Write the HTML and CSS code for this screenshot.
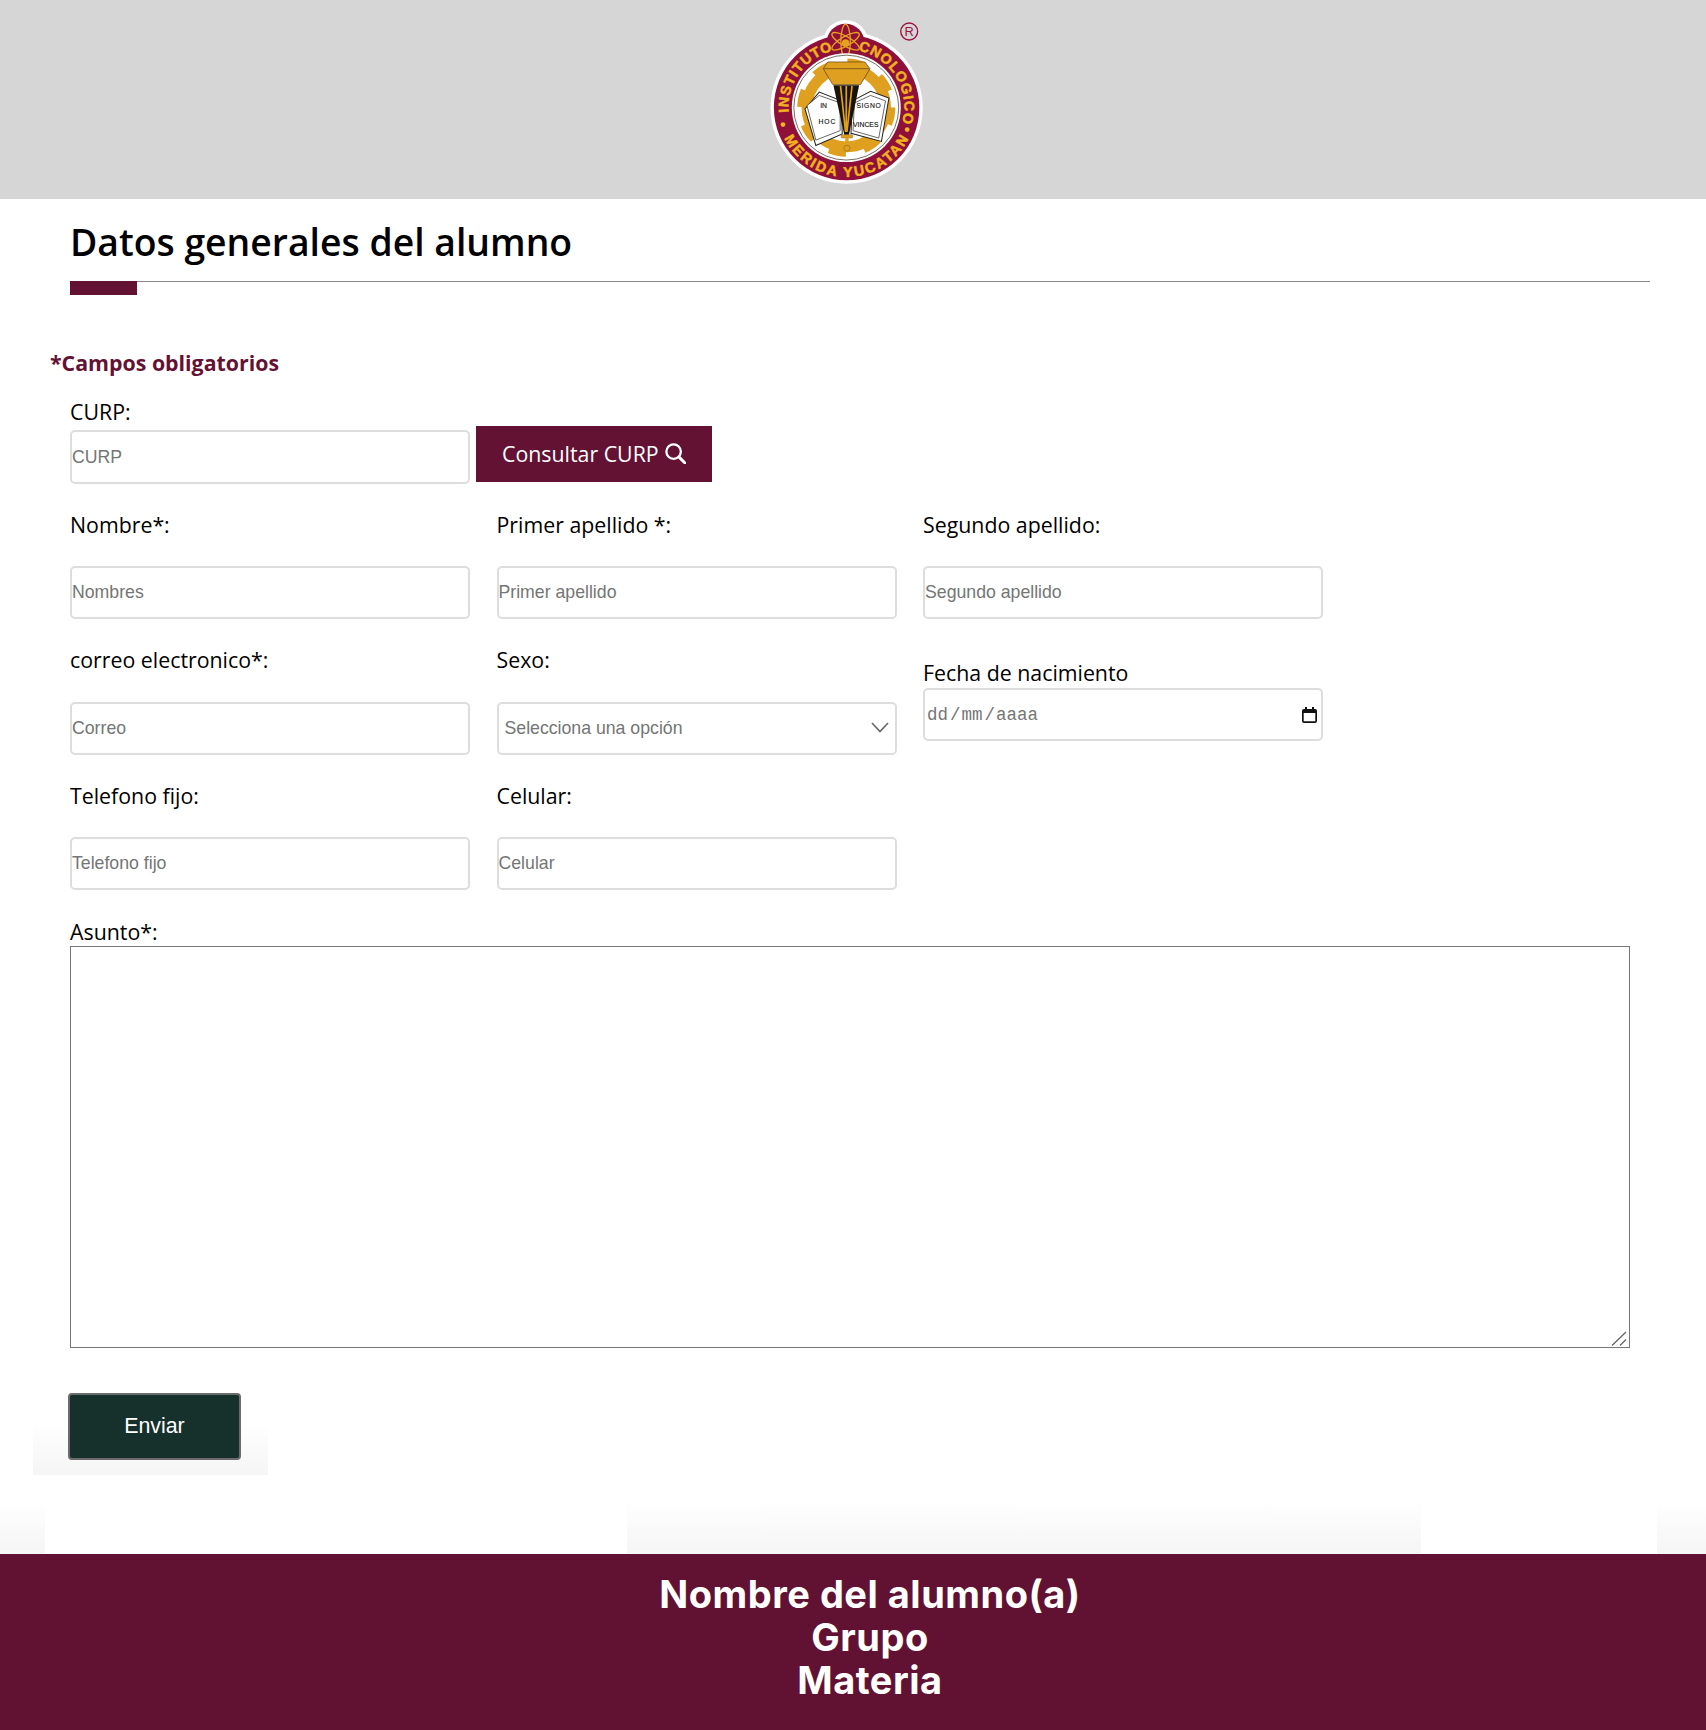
FILE: index.html
```html
<!DOCTYPE html>
<html lang="es">
<head>
    <meta charset="UTF-8">
    <meta name="viewport" content="width=device-width, initial-scale=1.0">
    <title>Datos generales del alumno</title>
    <link rel="stylesheet" href="styles.css">
</head>
<body>
    <header class="top-bar">
        <svg class="logo" viewBox="0 0 600 588" aria-label="Instituto Tecnologico Merida Yucatan">
            <defs>
                <path id="arc-top" d="M 150 332 A 171 171 0 1 1 488 350"></path>
                <path id="arc-bottom" d="M 137 408 A 205 205 0 0 0 505 408"></path>
            </defs>
            <!-- outer shapes -->
            <circle cx="321" cy="318" r="225" fill="#fff"></circle>
            <circle cx="318" cy="125" r="66" fill="#fff"></circle>
            <circle cx="321" cy="318" r="215" fill="#8f1139"></circle>
            <circle cx="318" cy="126" r="56" fill="#8f1139"></circle>
            <!-- ring text -->
            <text class="logo-ring" textLength="600" lengthAdjust="spacing"><textPath href="#arc-top">INSTITUTO TECNOLOGICO</textPath></text>
            <text class="logo-ring" textLength="455" lengthAdjust="spacing"><textPath href="#arc-bottom">MERIDA YUCATAN</textPath></text>
            <circle cx="133" cy="368" r="7" fill="#f0b21f"></circle>
            <circle cx="500" cy="383" r="7" fill="#f0b21f"></circle>
            <!-- atom, over the ring text -->
            <circle cx="318" cy="130" r="38" fill="#8f1139"></circle>
            <g fill="none" stroke="#e6a11f" stroke-width="4">
                <ellipse cx="318" cy="122" rx="14" ry="50"></ellipse>
                <ellipse cx="318" cy="122" rx="14" ry="46" transform="rotate(60 318 122)"></ellipse>
                <ellipse cx="318" cy="122" rx="14" ry="46" transform="rotate(-60 318 122)"></ellipse>
            </g>
            <circle cx="318" cy="127" r="11" fill="#e6a11f"></circle>
            <!-- inner disc -->
            <circle cx="320" cy="318" r="161" fill="#fff"></circle>
            <circle cx="320" cy="318" r="155" fill="none" stroke="#3a2a1a" stroke-width="2"></circle>
            <!-- gear -->
            <circle cx="320" cy="318" r="116" fill="none" stroke="#e0a01f" stroke-width="32"></circle>
            <circle cx="320" cy="318" r="137" fill="none" stroke="#e0a01f" stroke-width="16" stroke-dasharray="52 56"></circle>
            <!-- books -->
            <polygon points="198,322 240,272 306,298 308,396 230,430" fill="#fff" stroke="#222" stroke-width="3"></polygon>
            <polygon points="204,312 240,282 302,304 302,386 230,414" fill="#fff" stroke="#222" stroke-width="2"></polygon>
            <polygon points="338,298 392,270 446,290 424,418 334,394" fill="#fff" stroke="#222" stroke-width="3"></polygon>
            <polygon points="344,304 392,282 436,298 416,408 340,386" fill="#fff" stroke="#222" stroke-width="2"></polygon>
            <text class="logo-book" x="243" y="318">IN</text>
            <text class="logo-book" x="238" y="366" textLength="50">HOC</text>
            <text class="logo-book" x="350" y="318" textLength="72">SIGNO</text>
            <text class="logo-book" x="340" y="374" textLength="75">VINCES</text>
            <!-- torch -->
            <polygon points="265,183 375,183 390,203 362,250 280,250 252,203" fill="#e0a01f" stroke="#5a3c0c" stroke-width="2"></polygon>
            <path d="M254 203 H388" stroke="#5a3c0c" stroke-width="2"></path>
            <polygon points="282,252 358,252 328,398 314,398" fill="#1a1308"></polygon>
            <path d="M303 254 L318 390 M320 254 L320 390 M337 254 L322 390" stroke="#e0a01f" stroke-width="5" fill="none"></path>
            <rect x="305" y="398" width="34" height="10" rx="3" fill="#e0a01f" stroke="#5a3c0c"></rect>
            <rect x="317" y="408" width="10" height="24" fill="#e0a01f"></rect>
            <circle cx="322" cy="438" r="9" fill="#e0a01f" stroke="#5a3c0c"></circle>
            <!-- registered mark -->
            <circle cx="506" cy="93" r="25" fill="none" stroke="#a01040" stroke-width="4"></circle>
            <text class="logo-mark" x="506" y="107" text-anchor="middle">R</text>
        </svg>
    </header>

    <main>
        <div class="title-block">
            <h1 class="page-title">Datos generales del alumno</h1>
            <div class="title-rule"><span class="title-accent"></span></div>
        </div>

        <p class="required-note">*Campos obligatorios</p>

        <form class="student-form">
            <label class="curp-label" for="curp">CURP:</label>
            <div class="curp-row">
                <input class="text-input" type="text" id="curp" placeholder="CURP">
                <button class="curp-button" type="button">
                    Consultar CURP
                    <svg class="search-icon" viewBox="0 0 20 20">
                        <circle cx="8.2" cy="8.2" r="6.9" fill="none" stroke="#fff" stroke-width="2.2"></circle>
                        <path d="M13.2 13.2 L19 19" stroke="#fff" stroke-width="2.8" stroke-linecap="round"></path>
                    </svg>
                </button>
            </div>

            <div class="field-grid">
                <div class="field">
                    <label for="nombre">Nombre*:</label>
                    <input class="text-input" type="text" id="nombre" placeholder="Nombres">
                </div>
                <div class="field">
                    <label for="apellido1">Primer apellido *:</label>
                    <input class="text-input" type="text" id="apellido1" placeholder="Primer apellido">
                </div>
                <div class="field">
                    <label for="apellido2">Segundo apellido:</label>
                    <input class="text-input" type="text" id="apellido2" placeholder="Segundo apellido">
                </div>
                <div class="field">
                    <label for="correo">correo electronico*:</label>
                    <input class="text-input" type="text" id="correo" placeholder="Correo">
                </div>
                <div class="field">
                    <label for="sexo">Sexo:</label>
                    <div class="select-wrap">
                        <select class="text-input select-input" id="sexo">
                            <option>Selecciona una opción</option>
                        </select>
                        <svg class="select-arrow" viewBox="0 0 18 11">
                            <path d="M1 1 L9 9.5 L17 1" fill="none" stroke="#666" stroke-width="1.6"></path>
                        </svg>
                    </div>
                </div>
                <div class="field field-date">
                    <label>Fecha de nacimiento</label>
                    <div class="date-box">
                        <span class="date-text"><span>dd</span><i>/</i><span>mm</span><i>/</i><span>aaaa</span></span>
                        <svg class="date-icon" viewBox="0 0 15 16">
                            <path d="M3 0 H5 V2 H10 V0 H12 V2 H13 A2 2 0 0 1 15 4 V14 A2 2 0 0 1 13 16 H2 A2 2 0 0 1 0 14 V4 A2 2 0 0 1 2 2 H3 Z M1.7 6 V14.3 H13.3 V6 Z" fill="#111" fill-rule="evenodd"></path>
                        </svg>
                    </div>
                </div>
                <div class="field">
                    <label for="telefono">Telefono fijo:</label>
                    <input class="text-input" type="text" id="telefono" placeholder="Telefono fijo">
                </div>
                <div class="field">
                    <label for="celular">Celular:</label>
                    <input class="text-input" type="text" id="celular" placeholder="Celular">
                </div>
            </div>

            <label class="subject-label" for="asunto">Asunto*:</label>
            <div class="subject-wrap">
                <textarea class="subject-input" id="asunto"></textarea>
                <svg class="subject-grip" viewBox="0 0 16 15">
                    <path d="M1 14.5 L15 1 M9 14.5 L15 8.5" fill="none" stroke="#666" stroke-width="1.3"></path>
                </svg>
            </div>

            <div class="send-wrap">
                <button class="send-button" type="submit">Enviar</button>
            </div>
        </form>

        <div class="fade-strip">
            <span class="fade-on fade-a"></span>
            <span class="fade-off fade-b"></span>
            <span class="fade-on fade-c"></span>
            <span class="fade-off fade-d"></span>
            <span class="fade-on fade-e"></span>
        </div>
    </main>

    <footer class="bottom-bar">
        <div>Nombre del alumno(a)</div>
        <div>Grupo</div>
        <div>Materia</div>
    </footer>
</body>
</html>
```

FILE: styles.css
```css
html, body {
    margin: 0;
    background-color: #fff;
    color: #000;
    font-family: 'Open Sans', sans-serif;
}

/* top logo bar */
.top-bar {
    height: 199px;
    background-color: #d6d6d6;
    display: flex;
    justify-content: center;
    padding-right: 28px;
    box-sizing: border-box;
}
.logo {
    width: 203px;
    height: 199px;
}
.logo-ring {
    font-family: 'Liberation Sans', sans-serif;
    font-weight: 700;
    font-size: 42px;
    fill: #f0b21f;
    stroke: #f0b21f;
    stroke-width: 1.5;
}
.logo-book {
    font-family: 'Liberation Sans', sans-serif;
    font-size: 20px;
    fill: #111;
    stroke: #111;
    stroke-width: 0.4;
}
.logo-mark {
    font-family: 'Liberation Sans', sans-serif;
    font-size: 38px;
    fill: #a01040;
}

/* title */
.title-block {
    padding: 18px 56px 0 70px;
}
.page-title {
    margin: 0 0 15px;
    font-size: 37.33px;
    line-height: 49px;
    font-weight: 600;
}
.title-rule {
    height: 14px;
    border-top: 1px solid #888;
    box-sizing: border-box;
}
.title-accent {
    display: block;
    width: 67px;
    height: 14px;
    margin-top: -1px;
    background-color: #631234;
}
.required-note {
    margin: 53.5px 0 0 50px;
    font-size: 21.33px;
    line-height: 27px;
    font-weight: 700;
    color: #631234;
}

/* form */
.student-form {
    display: flex;
    flex-direction: column;
    align-items: flex-start;
    padding-left: 70px;
}
label {
    display: block;
    font-size: 21.33px;
    line-height: 25px;
    padding-bottom: 2px;
}
.curp-label {
    margin-top: 23px;
}
.curp-row {
    display: flex;
    align-items: flex-start;
    gap: 6px;
    margin-top: 0.5px;
}
.curp-row .text-input {
    height: 54px;
    margin-top: 4px;
}
.text-input {
    display: block;
    width: 400px;
    height: 53px;
    padding: 0;
    border: 2px solid #ddd;
    border-radius: 5px;
    box-sizing: border-box;
    background-color: #fff;
    font-family: 'Liberation Sans', sans-serif;
    font-size: 17.7px;
    color: #757575;
    outline: none;
}
.text-input::placeholder {
    color: #757575;
    opacity: 1;
}
.curp-button {
    display: flex;
    align-items: center;
    gap: 6px;
    width: 236px;
    height: 56px;
    padding: 0 0 1px 26px;
    border: none;
    box-sizing: border-box;
    background-color: #631234;
    color: #fff;
    font-family: 'Open Sans', sans-serif;
    font-size: 21.33px;
    cursor: pointer;
}
.search-icon {
    width: 21px;
    height: 21px;
}

.field-grid {
    display: grid;
    grid-template-columns: repeat(3, 400px);
    column-gap: 26.5px;
    row-gap: 28px;
    margin-top: 27.5px;
}
.field label {
    margin-bottom: 27.5px;
}
.field-date {
    padding-top: 12.5px;
}
.field-date label {
    margin-bottom: 1.5px;
}
.select-wrap {
    position: relative;
}
.select-input {
    appearance: none;
    padding-left: 6px;
}
.select-arrow {
    position: absolute;
    top: 20px;
    right: 8px;
    width: 18px;
    height: 11px;
    pointer-events: none;
}
.date-box {
    display: flex;
    align-items: center;
    justify-content: space-between;
    height: 53px;
    padding: 1px 4px 0 2px;
    border: 2px solid #ddd;
    border-radius: 5px;
    box-sizing: border-box;
}
.date-text {
    font-family: 'Liberation Mono', monospace;
    font-size: 17.5px;
    color: #757575;
}
.date-text i {
    font-style: normal;
    margin: 0 1px 0 2px;
}
.date-icon {
    width: 15px;
    height: 16px;
    margin-top: -1px;
}

.subject-label {
    margin-top: 28.5px;
}
.subject-wrap {
    position: relative;
    margin-top: 0.5px;
}
.subject-input {
    display: block;
    width: 1560px;
    height: 402px;
    margin: 0;
    padding: 2px;
    border: 1px solid #767676;
    box-sizing: border-box;
    outline: none;
    resize: none;
}
.subject-grip {
    position: absolute;
    right: 3px;
    bottom: 2px;
    width: 16px;
    height: 15px;
    pointer-events: none;
}

/* send button, with the soft shade under it */
.send-wrap {
    width: 235px;
    margin: 45px 0 0 -37px;
    padding: 0 0 15px 35px;
    box-sizing: border-box;
    background: linear-gradient(to bottom, #fff 35%, #f5f5f5 100%);
}
.send-button {
    display: block;
    width: 173px;
    height: 67px;
    border: 2px solid #6b6b6b;
    border-radius: 4px;
    background-color: #16302b;
    color: #fff;
    font-family: 'Liberation Sans', sans-serif;
    font-size: 21.33px;
    cursor: pointer;
}

.fade-strip {
    display: flex;
    height: 54px;
    margin-top: 25px;
}
.fade-on {
    background: linear-gradient(to bottom, #fff, #f5f5f5);
}
.fade-a { width: 45px; }
.fade-b { width: 582px; }
.fade-c { width: 794px; }
.fade-d { width: 236px; }
.fade-e { width: 49px; }

.bottom-bar {
    height: 176px;
    padding: 19px 0 0 34px;
    box-sizing: border-box;
    background-color: #611233;
    color: #fff;
    font-family: Inter, sans-serif;
    font-size: 38px;
    letter-spacing: 0.5px;
    line-height: 43px;
    font-weight: 700;
    text-align: center;
}
```
